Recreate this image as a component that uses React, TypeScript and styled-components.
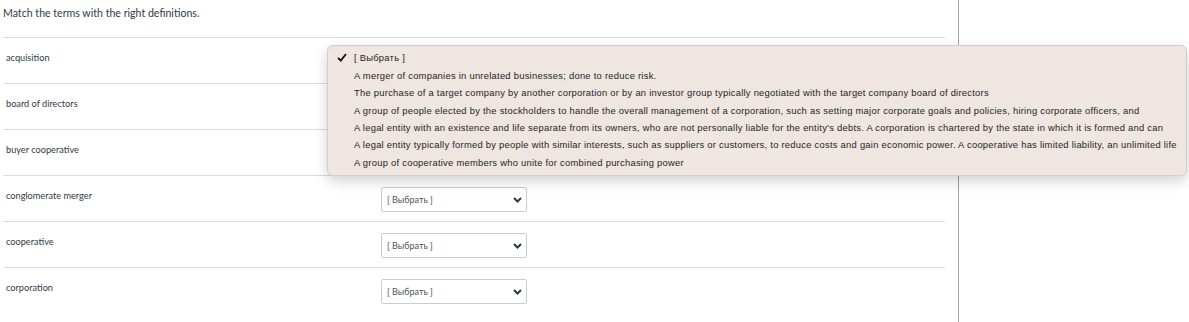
import { memo } from "react";
import styled, { createGlobalStyle } from "styled-components";

const terms = [
  "acquisition",
  "board of directors",
  "buyer cooperative",
  "conglomerate merger",
  "cooperative",
  "corporation",
];

// the open menu clips each option at its right edge
const options = [
  "A merger of companies in unrelated businesses; done to reduce risk.",
  "The purchase of a target company by another corporation or by an investor group typically negotiated with the target company board of directors",
  "A group of people elected by the stockholders to handle the overall management of a corporation, such as setting major corporate goals and policies, hiring corporate officers, and",
  "A legal entity with an existence and life separate from its owners, who are not personally liable for the entity's debts. A corporation is chartered by the state in which it is formed and can",
  "A legal entity typically formed by people with similar interests, such as suppliers or customers, to reduce costs and gain economic power. A cooperative has limited liability, an unlimited life",
  "A group of cooperative members who unite for combined purchasing power",
];

const Chevron = () => (
  <svg width="9" height="6" viewBox="0 0 9 6">
    <path d="M1 1 L4.5 4.5 L8 1" fill="none" stroke="#2d3b45" strokeWidth="2" />
  </svg>
);

const Check = () => (
  <svg width="10" height="9" viewBox="0 0 10 9">
    <path d="M1 4.8 L3.8 7.6 L9 1" fill="none" stroke="#111" strokeWidth="1.8" />
  </svg>
);

export default memo(function App() {
  return (
    <>
      <GlobalStyle />
      <Page>
        <Main>
          <Title>Match the terms with the right definitions.</Title>
          <List>
            {terms.map((t, i) => (
              <Row key={t}>
                <Term>{t}</Term>
                <Select $covered={i < 3}>
                  <span>[ Выбрать ]</span>
                  <Chevron />
                </Select>
              </Row>
            ))}
          </List>
        </Main>
        <Side />
        <Menu>
          <MenuItem $first>
            <Mark>
              <Check />
            </Mark>
            [ Выбрать ]
          </MenuItem>
          {options.map((o) => (
            <MenuItem key={o}>
              <Mark />
              {o}
            </MenuItem>
          ))}
        </Menu>
      </Page>
    </>
  );
});

// styled-components
const GlobalStyle = createGlobalStyle`
  body {
    margin: 0;
    background: #fff;
    font-family: Lato, "Liberation Sans", sans-serif;
    color: #2d3b45;
  }
`;
const Page = styled.div`
  position: relative;
  display: flex;
  height: 322px;
  overflow: hidden;
`;
const Main = styled.div`
  width: 942px;
  padding: 0 13px 0 3px;
  border-right: 1px solid #a5a5a5;
`;
const Side = styled.div`
  flex: 1;
`;
const Title = styled.p`
  margin: 0;
  padding-top: 6px;
  height: 31px;
  font-size: 10.6px;
  line-height: 14px;
`;
const List = styled.ul`
  margin: 0;
  padding: 0;
  list-style: none;
`;
const Row = styled.li`
  display: grid;
  grid-template-columns: 378px 146px;
  height: 46px;
  box-sizing: border-box;
  border-top: 1px solid #d9dcde;
  padding-top: 11px;
`;
const Term = styled.div`
  padding: 3px 0 0 3px;
  font-size: 9.2px;
  line-height: 12px;
`;
const Select = styled.div<{ $covered?: boolean }>`
  display: flex;
  align-items: center;
  justify-content: space-between;
  height: 25px;
  box-sizing: border-box;
  padding: 0 4px 0 5px;
  border: 1px solid #c7cdd1;
  border-radius: 2px;
  font-size: 9px;
  color: #4a565e;
  visibility: ${(p) => (p.$covered ? "hidden" : "visible")};
`;
const Menu = styled.div`
  position: absolute;
  top: 45px;
  left: 327px;
  width: 860px;
  box-sizing: border-box;
  padding: 2px 0 4px;
  background: #efe6e1;
  border: 1px solid #d3cdca;
  border-radius: 6px;
  box-shadow: 0 5px 14px rgba(0, 0, 0, 0.18);
  overflow: hidden;
`;
const MenuItem = styled.div<{ $first?: boolean }>`
  display: flex;
  align-items: center;
  height: ${(p) => (p.$first ? "19px" : "17.3px")};
  white-space: nowrap;
  font-family: "Liberation Sans", Arial, sans-serif;
  font-size: 9.4px;
  letter-spacing: 0.26px;
  color: #1e1e1e;
`;
const Mark = styled.span`
  display: inline-flex;
  justify-content: center;
  width: 25px;
  padding-left: 1px;
  flex-shrink: 0;
`;
